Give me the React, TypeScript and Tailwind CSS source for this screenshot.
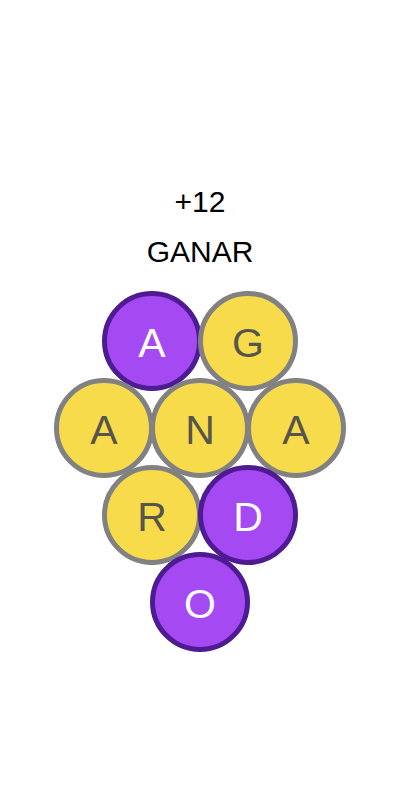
import React from "react";

type Cell = { l: string; p: boolean };

const rows: Cell[][] = [
  [{ l: "A", p: true }, { l: "G", p: false }],
  [{ l: "A", p: false }, { l: "N", p: false }, { l: "A", p: false }],
  [{ l: "R", p: false }, { l: "D", p: true }],
  [{ l: "O", p: true }],
];

function Circle({ c, first }: { c: Cell; first: boolean }) {
  return (
    <div
      className={
        (first ? "" : "-ml-[4px] ") +
        (c.p
          ? "bg-[#a54af3] border-[#4d1b92] text-white "
          : "bg-[#f8db4b] border-[#818181] text-[#56554b] ") +
        "w-[100px] h-[100px] rounded-full border-[5px] flex items-center justify-center text-[41px] leading-none"
      }
    >
      <span className="mt-[5px]">{c.l}</span>
    </div>
  );
}

export default function App() {
  return (
    <div
      className="w-[400px] h-[800px] bg-white flex flex-col items-center"
      style={{ fontFamily: '"Liberation Sans", Arial, sans-serif' }}
    >
      <div className="mt-[177px] text-[30px] leading-[50px] text-black">+12</div>
      <div className="text-[30px] leading-[50px] text-black">GANAR</div>
      <div className="mt-[14px] flex flex-col items-center">
        {rows.map((r, i) => (
          <div key={i} className={(i === 0 ? "" : "-mt-[13px] ") + "flex"}>
            {r.map((c, j) => (
              <Circle key={j} c={c} first={j === 0} />
            ))}
          </div>
        ))}
      </div>
    </div>
  );
}
